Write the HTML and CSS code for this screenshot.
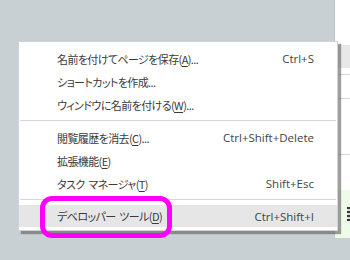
FILE: index.html
```html
<!DOCTYPE html>
<html lang="ja">
<head>
    <meta charset="UTF-8">
    <meta name="viewport" content="width=device-width, initial-scale=1.0">
    <title>メニュー</title>
    <link rel="stylesheet" href="styles.css">
</head>
<body>
    <div class="fundo">
        <div class="area-cinza"></div>
        <div class="pagina">
            <div class="faixa-topo"></div>
            <div class="faixa-cinza"></div>
            <div class="linha linha-1"></div>
            <div class="linha linha-2"></div>
            <div class="linha linha-3"></div>
            <div class="faixa-verde">
                <span class="icone-barra"></span>
            </div>
        </div>
    </div>

    <!-- Menu de contexto por cima da página -->
    <div class="menu">
        <div class="item">
            <span class="rotulo">名前を付けてページを保存(<u>A</u>)...</span>
            <span class="atalho">Ctrl+S</span>
        </div>
        <div class="item">
            <span class="rotulo">ショートカットを作成...</span>
        </div>
        <div class="item">
            <span class="rotulo">ウィンドウに名前を付ける(<u>W</u>)...</span>
        </div>
        <div class="separador"></div>
        <div class="item">
            <span class="rotulo">閲覧履歴を消去(<u>C</u>)...</span>
            <span class="atalho">Ctrl+Shift+Delete</span>
        </div>
        <div class="item">
            <span class="rotulo">拡張機能(<u>E</u>)</span>
        </div>
        <div class="item">
            <span class="rotulo">タスク マネージャ(<u>T</u>)</span>
            <span class="atalho">Shift+Esc</span>
        </div>
        <div class="separador"></div>
        <div class="item ativo">
            <span class="rotulo">デベロッパー ツール(<u>D</u>)</span>
            <span class="atalho">Ctrl+Shift+I</span>
        </div>
        <div class="destaque"></div>
    </div>
</body>
</html>
```

FILE: styles.css
```css
body {
    margin: 0;
    width: 350px;
    height: 260px;
    background-color: #c9d0d3;
    font-family: 'Noto Sans CJK JP', 'Noto Sans', sans-serif;
    position: relative;
    overflow: hidden;
}

.fundo {
    display: flex;
    height: 238px;
}

.area-cinza {
    flex: 1;
}

.pagina {
    width: 15px;
    background-color: white;
    border-left: 1px solid #bfc5c8;
    display: flex;
    flex-direction: column;
}

.faixa-topo {
    height: 45px;
}

.faixa-cinza {
    height: 23px;
    background-color: #e8e8e8;
}

.linha {
    border-top: 1px solid #d8d8d8;
}

.linha-1 {
    margin-top: 6px;
}

.linha-2 {
    margin-top: 23px;
}

.linha-3 {
    margin-top: 55px;
}

.faixa-verde {
    margin-top: auto;
    height: 48px;
    background-color: #eefbe9;
    display: flex;
    align-items: center;
    justify-content: flex-end;
}

.icone-barra {
    width: 3px;
    height: 14px;
    background: repeating-linear-gradient(#333 0 2px, #ddd 2px 4px);
}

/* Menu */
.menu {
    position: absolute;
    left: 18px;
    top: 41px;
    width: 318px;
    padding: 5px 0 3px;
    background-color: white;
    border: 1px solid #d4d4d4;
    box-shadow: 3px 3px 1px rgba(80, 80, 80, 0.55);
    font-size: 11px;
    color: #3a3a3a;
}

.item {
    height: 23px;
    display: flex;
    align-items: center;
    justify-content: space-between;
    padding: 0 23px 0 38px;
}

.rotulo {
    font-feature-settings: "palt";
    letter-spacing: -0.6px;
    word-spacing: 2px;
}

.item u {
    text-underline-offset: 2px;
}

.atalho {
    font-family: 'Open Sans', sans-serif;
    font-size: 11.5px;
    color: #444;
}

.ativo {
    background-color: #e6e6e6;
    height: 22px;
}

.separador {
    height: 1px;
    background-color: #d7d7d7;
    margin: 4px 1px 5px;
}

.destaque {
    position: absolute;
    left: 21px;
    top: 154px;
    width: 122px;
    height: 32px;
    border: 5px solid #ff00ff;
    border-radius: 12px;
}
```
